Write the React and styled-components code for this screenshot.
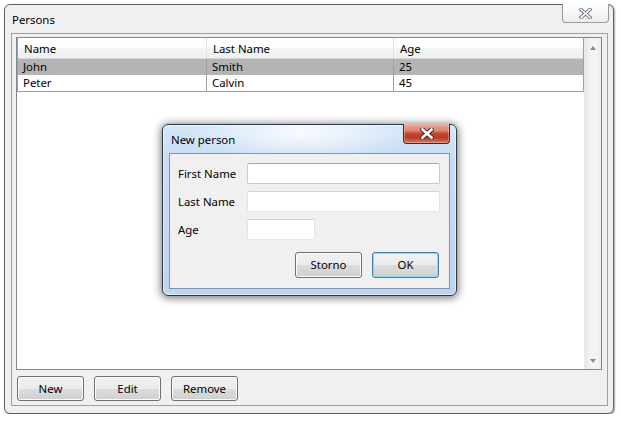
import React from "react";
import styled, { createGlobalStyle } from "styled-components";

const GlobalStyle = createGlobalStyle`
  html, body { margin: 0; padding: 0; background: #ffffff; }
  body { font-family: "Noto Sans", "Liberation Sans", Arial, sans-serif; font-size: 11.4px; color: #000; }
  * { box-sizing: border-box; }
`;

const Page = styled.div`
  padding: 4px 0 0 4px;
`;

const Window = styled.div`
  position: relative;
  width: 610px;
  height: 410px;
  border: 1px solid #5f5f5f;
  border-radius: 6px;
  background: #f0f0f0;
  box-shadow: 1px 1px 2px rgba(0, 0, 0, 0.35);
  display: flex;
  flex-direction: column;
`;

const TitleBar = styled.div`
  height: 28px;
  display: flex;
  align-items: center;
  padding-left: 7px;
  flex: none;
`;

const TitleText = styled.span`
  font-size: 11.4px;
  color: #000;
`;

const CaptionClose = styled.div`
  margin-left: auto;
  align-self: flex-start;
  margin-top: -1px;
  margin-right: 4px;
  width: 47px;
  height: 19px;
  border: 1px solid #9a9a9a;
  border-top: none;
  border-radius: 0 0 4px 4px;
  background: linear-gradient(#ffffff, #f6f6f6 50%, #ededed);
  display: flex;
  align-items: center;
  justify-content: center;
`;

const Frame = styled.div`
  flex: 1;
  margin: 0 5px 7px 6px;
  border: 1px solid #a0a0a0;
  display: flex;
  flex-direction: column;
  padding: 3px 5px 4px 4px;
  min-height: 0;
`;

const ListBox = styled.div`
  flex: 1;
  border: 1px solid #828790;
  background: #ffffff;
  display: flex;
  min-height: 0;
`;

const ListContent = styled.div`
  flex: 1;
  display: flex;
  flex-direction: column;
`;

const Table = styled.div`
  border-left: 1px solid #a0a0a0;
  border-right: 1px solid #a0a0a0;
  border-bottom: 1px solid #a0a0a0;
`;

const Row = styled.div`
  display: grid;
  grid-template-columns: 189px 187px 1fr;
  height: ${(p) => (p.$header ? "21px" : "16px")};
  background: ${(p) =>
    p.$header
      ? "linear-gradient(#ffffff 0%, #ffffff 45%, #f2f3f5 55%, #eff0f2 100%)"
      : p.$selected
      ? "#b4b4b4"
      : "#ffffff"};
  border-bottom: ${(p) => (p.$header ? "1px solid #d5d5d5" : "none")};
`;

const Cell = styled.div`
  display: flex;
  align-items: center;
  padding-left: ${(p) => (p.$header ? "6px" : "5px")};
  padding-top: ${(p) => (p.$header ? "1px" : "0")};
  border-right: ${(p) =>
    p.$last ? "none" : p.$header ? "1px solid #e2e3e5" : "1px solid #a0a0a0"};
  white-space: nowrap;
  overflow: hidden;
  line-height: 1;
`;

const ScrollBar = styled.div`
  width: 17px;
  flex: none;
  display: flex;
  flex-direction: column;
  justify-content: space-between;
  align-items: center;
  padding: 8px 0 6px;
  background: linear-gradient(to right, #e6e6e6, #f2f2f2 30%, #f4f4f4 70%, #ebebeb);
  border-left: 1px solid #eaeaea;
`;

const Arrow = styled.div`
  width: 0;
  height: 0;
  border-left: 3.5px solid transparent;
  border-right: 3.5px solid transparent;
  ${(p) =>
    p.$down
      ? "border-top: 4px solid #8a8a8a;"
      : "border-bottom: 4px solid #8a8a8a;"}
`;

const ButtonRow = styled.div`
  display: flex;
  gap: 10px;
  padding: 6px 0 0 1px;
  flex: none;
`;

const Button = styled.button`
  width: ${(p) => p.$w || 67}px;
  height: ${(p) => p.$h || 25}px;
  border: 1px solid ${(p) => (p.$default ? "#3c7fb1" : "#707070")};
  border-radius: 3px;
  background: linear-gradient(#f2f2f2 0%, #ebebeb 50%, #dddddd 51%, #cfcfcf 100%);
  box-shadow: inset 0 0 0 1px ${(p) => (p.$default ? "#8fd8f8" : "#fbfbfb")};
  font-family: inherit;
  font-size: 11.4px;
  color: #000;
  padding: 0;
  line-height: 1;
`;

const Dialog = styled.div`
  position: absolute;
  left: 157px;
  top: 119px;
  width: 295px;
  height: 172px;
  border: 1px solid #2e3640;
  border-radius: 6px;
  background:
    radial-gradient(ellipse 110px 28px at 47% 8px, rgba(255, 255, 255, 0.85), rgba(255, 255, 255, 0) 100%),
    linear-gradient(#d6e7f8 0%, #c7ddf3 20%, #bdd5ee 100%);
  box-shadow: inset 0 0 0 1px rgba(255, 255, 255, 0.55), 0 1px 8px 1px rgba(0, 0, 0, 0.55);
  display: flex;
  flex-direction: column;
  padding: 0 6px 6px 6px;
`;

const DialogTitleBar = styled.div`
  height: 28px;
  display: flex;
  align-items: center;
  padding-left: 2px;
  flex: none;
`;

const RedClose = styled.div`
  margin-left: auto;
  align-self: flex-start;
  margin-top: -1px;
  width: 47px;
  height: 20px;
  border: 1px solid #5a1f14;
  border-top: none;
  border-radius: 0 0 4px 4px;
  background: linear-gradient(#e9aa9b 0%, #dc8672 35%, #c7462f 50%, #b83b25 70%, #d27a63 100%);
  box-shadow: inset 0 0 0 1px rgba(255, 200, 190, 0.45);
  display: flex;
  align-items: center;
  justify-content: center;
`;

const Client = styled.div`
  flex: 1;
  border: 1px solid #8195aa;
  background: #f0f0f0;
  padding: 9px 10px 0 8px;
  display: flex;
  flex-direction: column;
`;

const FormGrid = styled.div`
  display: grid;
  grid-template-columns: 69px 1fr;
  row-gap: 7px;
  align-items: center;
`;

const Label = styled.label`
  font-size: 11.4px;
  color: #000;
  line-height: 1;
`;

const Input = styled.div`
  width: ${(p) => p.$w}px;
  height: 21px;
  background: #ffffff;
  border: 1px solid;
  border-radius: 2px;
  border-color: ${(p) =>
    p.$focused ? "#7eb4ea #aed0f2 #aed0f2 #aed0f2" : "#d0d2d6 #e2e3ea #e3e9ef #e2e3ea"};
`;

const DialogButtons = styled.div`
  display: flex;
  justify-content: flex-end;
  gap: 10px;
  margin-top: 12px;
`;

const columns = ["Name", "Last Name", "Age"];
const people = [
  { name: "John", last: "Smith", age: 25, selected: true },
  { name: "Peter", last: "Calvin", age: 45 },
];

function HollowX() {
  return (
    <svg width="13" height="11" viewBox="0 0 13 11">
      <path d="M2 1.5 L11 9.5 M11 1.5 L2 9.5" stroke="#6f7d8c" strokeWidth="3.6" strokeLinecap="square" />
      <path d="M2 1.5 L11 9.5 M11 1.5 L2 9.5" stroke="#ffffff" strokeWidth="1.6" strokeLinecap="square" />
    </svg>
  );
}

function BoldX() {
  return (
    <svg width="14" height="11" viewBox="0 0 14 11">
      <path d="M2.5 1.5 L11.5 9.5 M11.5 1.5 L2.5 9.5" stroke="#4a2a24" strokeWidth="4.6" strokeLinecap="square" />
      <path d="M2.5 1.5 L11.5 9.5 M11.5 1.5 L2.5 9.5" stroke="#ffffff" strokeWidth="2.6" strokeLinecap="square" />
    </svg>
  );
}

export default function App() {
  return (
    <Page>
      <GlobalStyle />
      <Window>
        <TitleBar>
          <TitleText>Persons</TitleText>
          <CaptionClose>
            <HollowX />
          </CaptionClose>
        </TitleBar>
        <Frame>
          <ListBox>
            <ListContent>
              <Table>
                <Row $header>
                  {columns.map((c, i) => (
                    <Cell key={c} $header $last={i === columns.length - 1}>
                      {c}
                    </Cell>
                  ))}
                </Row>
                {people.map((p) => (
                  <Row key={p.name} $selected={p.selected}>
                    <Cell>{p.name}</Cell>
                    <Cell>{p.last}</Cell>
                    <Cell $last>{p.age}</Cell>
                  </Row>
                ))}
              </Table>
            </ListContent>
            <ScrollBar>
              <Arrow />
              <Arrow $down />
            </ScrollBar>
          </ListBox>
          <ButtonRow>
            <Button>New</Button>
            <Button>Edit</Button>
            <Button>Remove</Button>
          </ButtonRow>
        </Frame>

        <Dialog>
          <DialogTitleBar>
            <TitleText>New person</TitleText>
            <RedClose>
              <BoldX />
            </RedClose>
          </DialogTitleBar>
          <Client>
            <FormGrid>
              <Label>First Name</Label>
              <Input $w={193} $focused />
              <Label>Last Name</Label>
              <Input $w={193} />
              <Label>Age</Label>
              <Input $w={68} />
            </FormGrid>
            <DialogButtons>
              <Button $h={26}>Storno</Button>
              <Button $h={26} $default>
                OK
              </Button>
            </DialogButtons>
          </Client>
        </Dialog>
      </Window>
    </Page>
  );
}
